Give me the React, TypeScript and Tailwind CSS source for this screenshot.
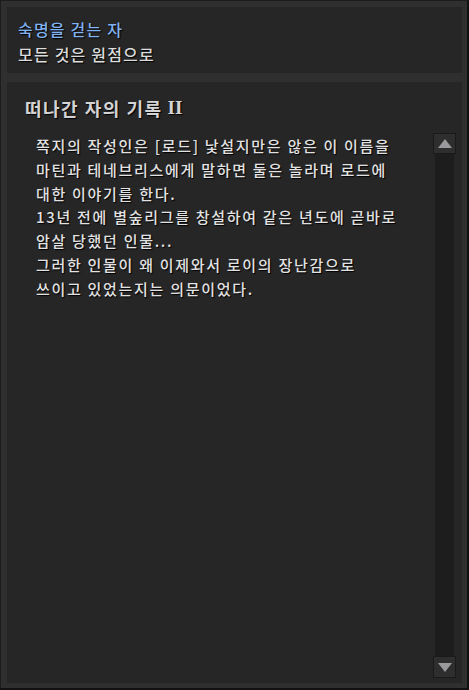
import React from "react";

const lines = [
  "쪽지의 작성인은 [로드] 낯설지만은 않은 이 이름을",
  "마틴과 테네브리스에게 말하면 둘은 놀라며 로드에",
  "대한 이야기를 한다.",
  "13년 전에 별숲리그를 창설하여 같은 년도에 곧바로",
  "암살 당했던 인물...",
  "그러한 인물이 왜 이제와서 로이의 장난감으로",
  "쓰이고 있었는지는 의문이었다.",
];

const font = { fontFamily: '"Noto Sans CJK KR", "Noto Sans", sans-serif' };

export default function App() {
  return (
    <div
      className="w-[469px] h-[690px] bg-[#2f2f2f] border-l border-t border-[#1c1c1c] border-r-[2px] border-r-[#111] border-b-[2px] border-b-[#111] flex flex-col gap-[9px] pl-[6px] pt-[6px] pr-[5px] pb-[5px] [text-shadow:1px_1px_1px_#000]"
      style={font}
    >
      <div className="h-[66px] bg-[#262626] flex flex-col justify-center pl-[11px] pt-[4px] shrink-0 font-medium">
        <div className="text-[16px] leading-[25px] tracking-[1.2px] text-[#80b3f0]">숙명을 걷는 자</div>
        <div className="text-[16px] leading-[25px] tracking-[1.2px] text-[#dcdcdc]">모든 것은 원점으로</div>
      </div>
      <div className="flex-1 bg-[#262626] flex flex-col pl-[18px] pr-[6px]">
        <div className="h-[51px] flex items-center pt-[2px] text-[18px] tracking-[1.5px] font-bold text-[#d4d4d4]">
          <span>떠나간 자의 기록</span>
          <span className="ml-[5px] tracking-[0px] text-[19px]" style={{ fontFamily: '"Liberation Serif", serif' }}>
            II
          </span>
        </div>
        <div className="flex-1 flex pb-[5px]">
          <div className="flex-1 pl-[11px] pt-[1px] text-[15px] leading-[23.8px] tracking-[1.7px] font-medium text-[#e2e2e2] whitespace-nowrap">
            {lines.map((l, i) => (
              <div key={i}>{l}</div>
            ))}
          </div>
          <div className="w-[23px] flex flex-col">
            <div className="h-[21px] border border-[#1a1a1a] bg-[#2e2e2e] flex items-center justify-center">
              <svg width="14" height="9" viewBox="0 0 14 9">
                <polygon points="7,0 14,9 0,9" fill="#9a9a9c" />
              </svg>
            </div>
            <div className="flex-1 mx-[2px] bg-[#1d1d1d]" />
            <div className="h-[22px] border border-[#1a1a1a] bg-[#2e2e2e] flex items-center justify-center">
              <svg width="14" height="9" viewBox="0 0 14 9">
                <polygon points="0,0 14,0 7,9" fill="#9a9a9c" />
              </svg>
            </div>
          </div>
        </div>
      </div>
    </div>
  );
}
